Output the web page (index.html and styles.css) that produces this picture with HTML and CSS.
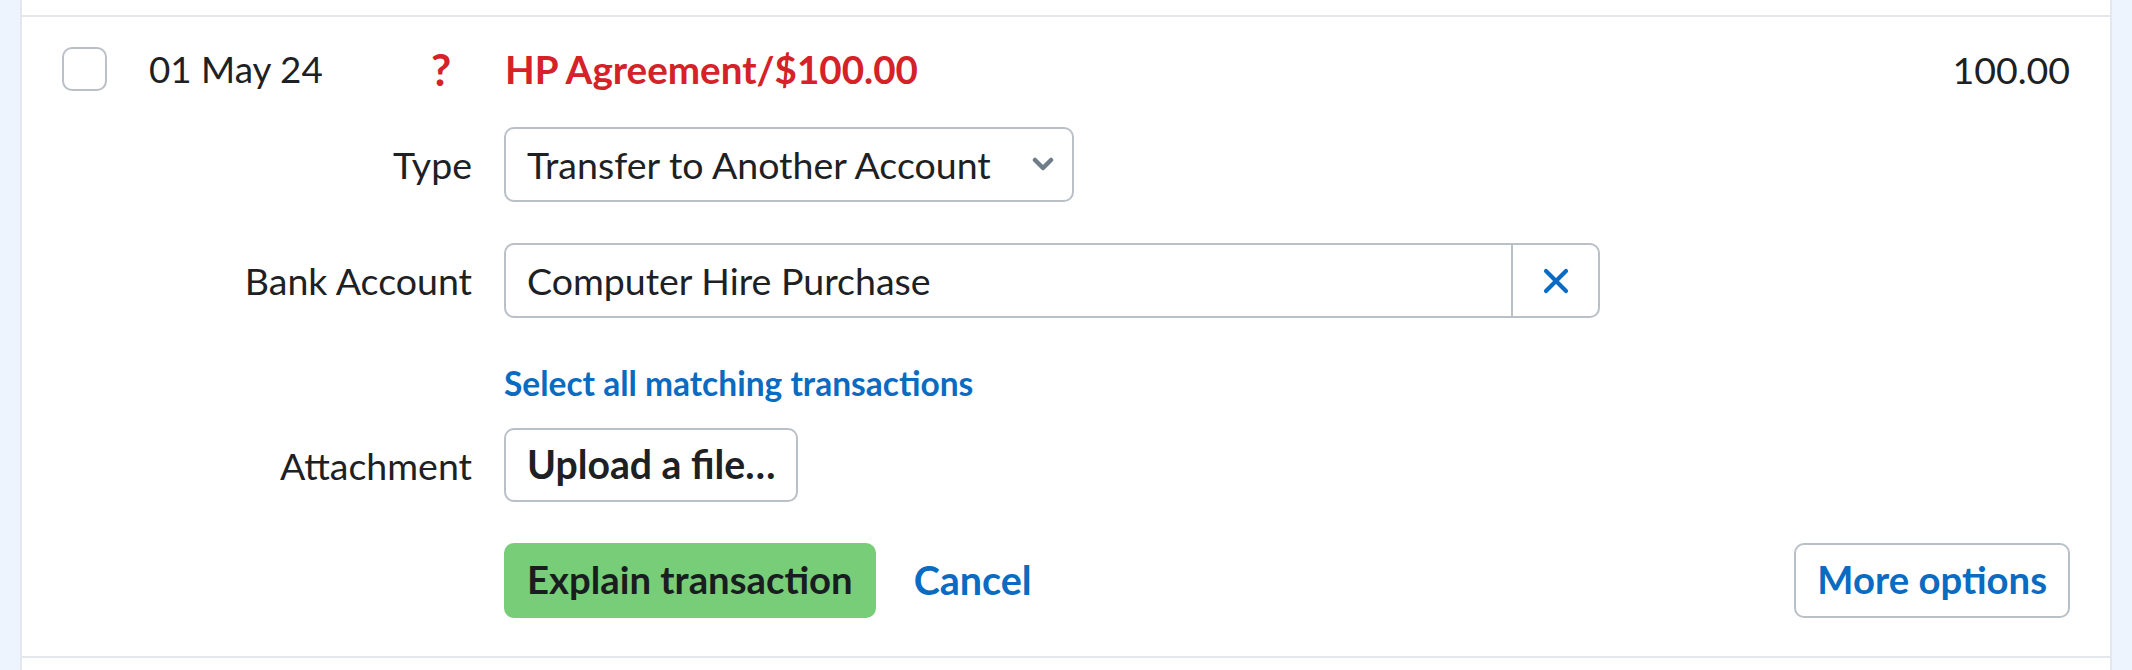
FILE: index.html
```html
<!DOCTYPE html>
<html lang="en">
<head>
<meta charset="utf-8">
<title>Bank transaction</title>
<link rel="stylesheet" href="styles.css">
</head>
<body>
<div class="panel">
  <div class="row-prev"></div>
  <div class="txn">
    <div class="txn-head">
      <span class="checkbox"></span>
      <span class="date">01 May 24</span>
      <span class="status">?</span>
      <span class="desc">HP Agreement/$100.00</span>
      <span class="amount">100.00</span>
    </div>
    <div class="form">
      <div class="field field-type">
        <label class="label">Type</label>
        <div class="select">
          <span class="select-text">Transfer to Another Account</span>
          <svg class="chevron" viewBox="0 0 22 15" width="22" height="15"><path d="M3 3 L11 11 L19 3" fill="none" stroke="#6f7d88" stroke-width="4.5" stroke-linecap="round" stroke-linejoin="round"/></svg>
        </div>
      </div>
      <div class="field field-bank">
        <label class="label">Bank Account</label>
        <div class="combo">
          <span class="combo-text">Computer Hire Purchase</span>
          <span class="combo-clear">
            <svg viewBox="0 0 26 26" width="26" height="26"><path d="M3 3 L23 23 M23 3 L3 23" fill="none" stroke="#0a6bc2" stroke-width="4.2" stroke-linecap="round"/></svg>
          </span>
        </div>
      </div>
      <div class="field field-link">
        <span class="label"></span>
        <a class="link" href="#">Select all matching transactions</a>
      </div>
      <div class="field field-attach">
        <label class="label">Attachment</label>
        <div class="control"><button class="btn btn-upload">Upload a file…</button></div>
      </div>
      <div class="field field-actions">
        <span class="label"></span>
        <div class="actions">
          <button class="btn btn-primary">Explain transaction</button>
          <a class="cancel" href="#">Cancel</a>
          <button class="btn btn-more">More options</button>
        </div>
      </div>
    </div>
  </div>
  <div class="row-next"></div>
</div>
</body>
</html>
```

FILE: styles.css
```css
html, body {
  margin: 0;
  padding: 0;
}
body {
  background: #eef4fd;
  font-family: "Lato", "Noto Sans", sans-serif;
  color: #1e2124;
  height: 670px;
  overflow: hidden;
}
.panel {
  margin: 0 20px 0 20px;
  background: #ffffff;
  border-left: 2px solid #e4e8ee;
  border-right: 2px solid #e4e8ee;
  height: 670px;
}
.row-prev {
  height: 15px;
}
.txn {
  border-top: 2px solid #e4e7eb;
  border-bottom: 2px solid #e4e7eb;
  padding: 30px 40px 38px 40px;
}
.txn-head {
  display: flex;
  align-items: center;
  height: 44px;
  font-size: 37.5px;
}
.checkbox {
  width: 41px;
  height: 40px;
  border: 2px solid #b9c0c7;
  border-radius: 10px;
  flex: none;
}
.date {
  margin-left: 42px;
  width: 282px;
  font-size: 36.8px;
}
.status {
  color: #d52128;
  font-weight: 700;
  font-size: 44px;
  width: 74px;
}
.desc {
  color: #d52128;
  font-weight: 700;
  font-size: 38.6px;
  flex: 1;
}
.amount {
  text-align: right;
}
.form {
  display: flex;
  flex-direction: column;
}
.field {
  display: grid;
  grid-template-columns: 410px 1fr;
  column-gap: 32px;
  align-items: center;
}
.field-type {
  margin-top: 36px;
}
.field-bank {
  margin-top: 41px;
}
.field-link {
  margin-top: 45px;
  height: 34px;
}
.field-attach {
  margin-top: 31px;
}
.field-actions {
  margin-top: 41px;
}
.label {
  text-align: right;
  font-size: 37.5px;
}
.select {
  height: 71px;
  border: 2px solid #b9c0c7;
  border-radius: 10px;
  display: flex;
  align-items: center;
  justify-content: space-between;
  padding: 0 18px 0 21px;
  box-sizing: content-box;
  width: 527px;
  font-size: 37.5px;
}
.chevron {
  display: block;
}
.combo {
  width: 1092px;
  height: 71px;
  border: 2px solid #b9c0c7;
  border-radius: 10px;
  display: flex;
  align-items: stretch;
  font-size: 37.5px;
}
.combo-text {
  flex: 1;
  display: flex;
  align-items: center;
  padding-left: 21px;
}
.combo-clear {
  width: 85px;
  border-left: 2px solid #b9c0c7;
  display: flex;
  align-items: center;
  justify-content: center;
}
.combo-clear svg {
  display: block;
}
.link {
  color: #0a6bc2;
  font-weight: 700;
  font-size: 33.5px;
  text-decoration: none;
}
.control {
  display: flex;
}
.btn {
  font-family: inherit;
  font-size: 38.3px;
  font-weight: 700;
  height: 75px;
  padding: 0 21px 3px;
  border-radius: 10px;
  cursor: pointer;
}
.btn-upload {
  background: #ffffff;
  border: 2px solid #b9c0c7;
  color: #1e2124;
  height: 74px;
  font-size: 39.2px;
}
.actions {
  display: flex;
  align-items: center;
}
.btn-primary {
  background: #78cd78;
  border: 2px solid #78cd78;
  color: #1a1d1f;
}
.cancel {
  margin-left: 38px;
  padding-bottom: 3px;
  color: #0a6bc2;
  font-size: 39.5px;
  font-weight: 700;
  text-decoration: none;
}
.btn-more {
  margin-left: auto;
  background: #ffffff;
  border: 2px solid #b9c0c7;
  color: #0a6bc2;
}
.row-next {
  height: 20px;
}
```
